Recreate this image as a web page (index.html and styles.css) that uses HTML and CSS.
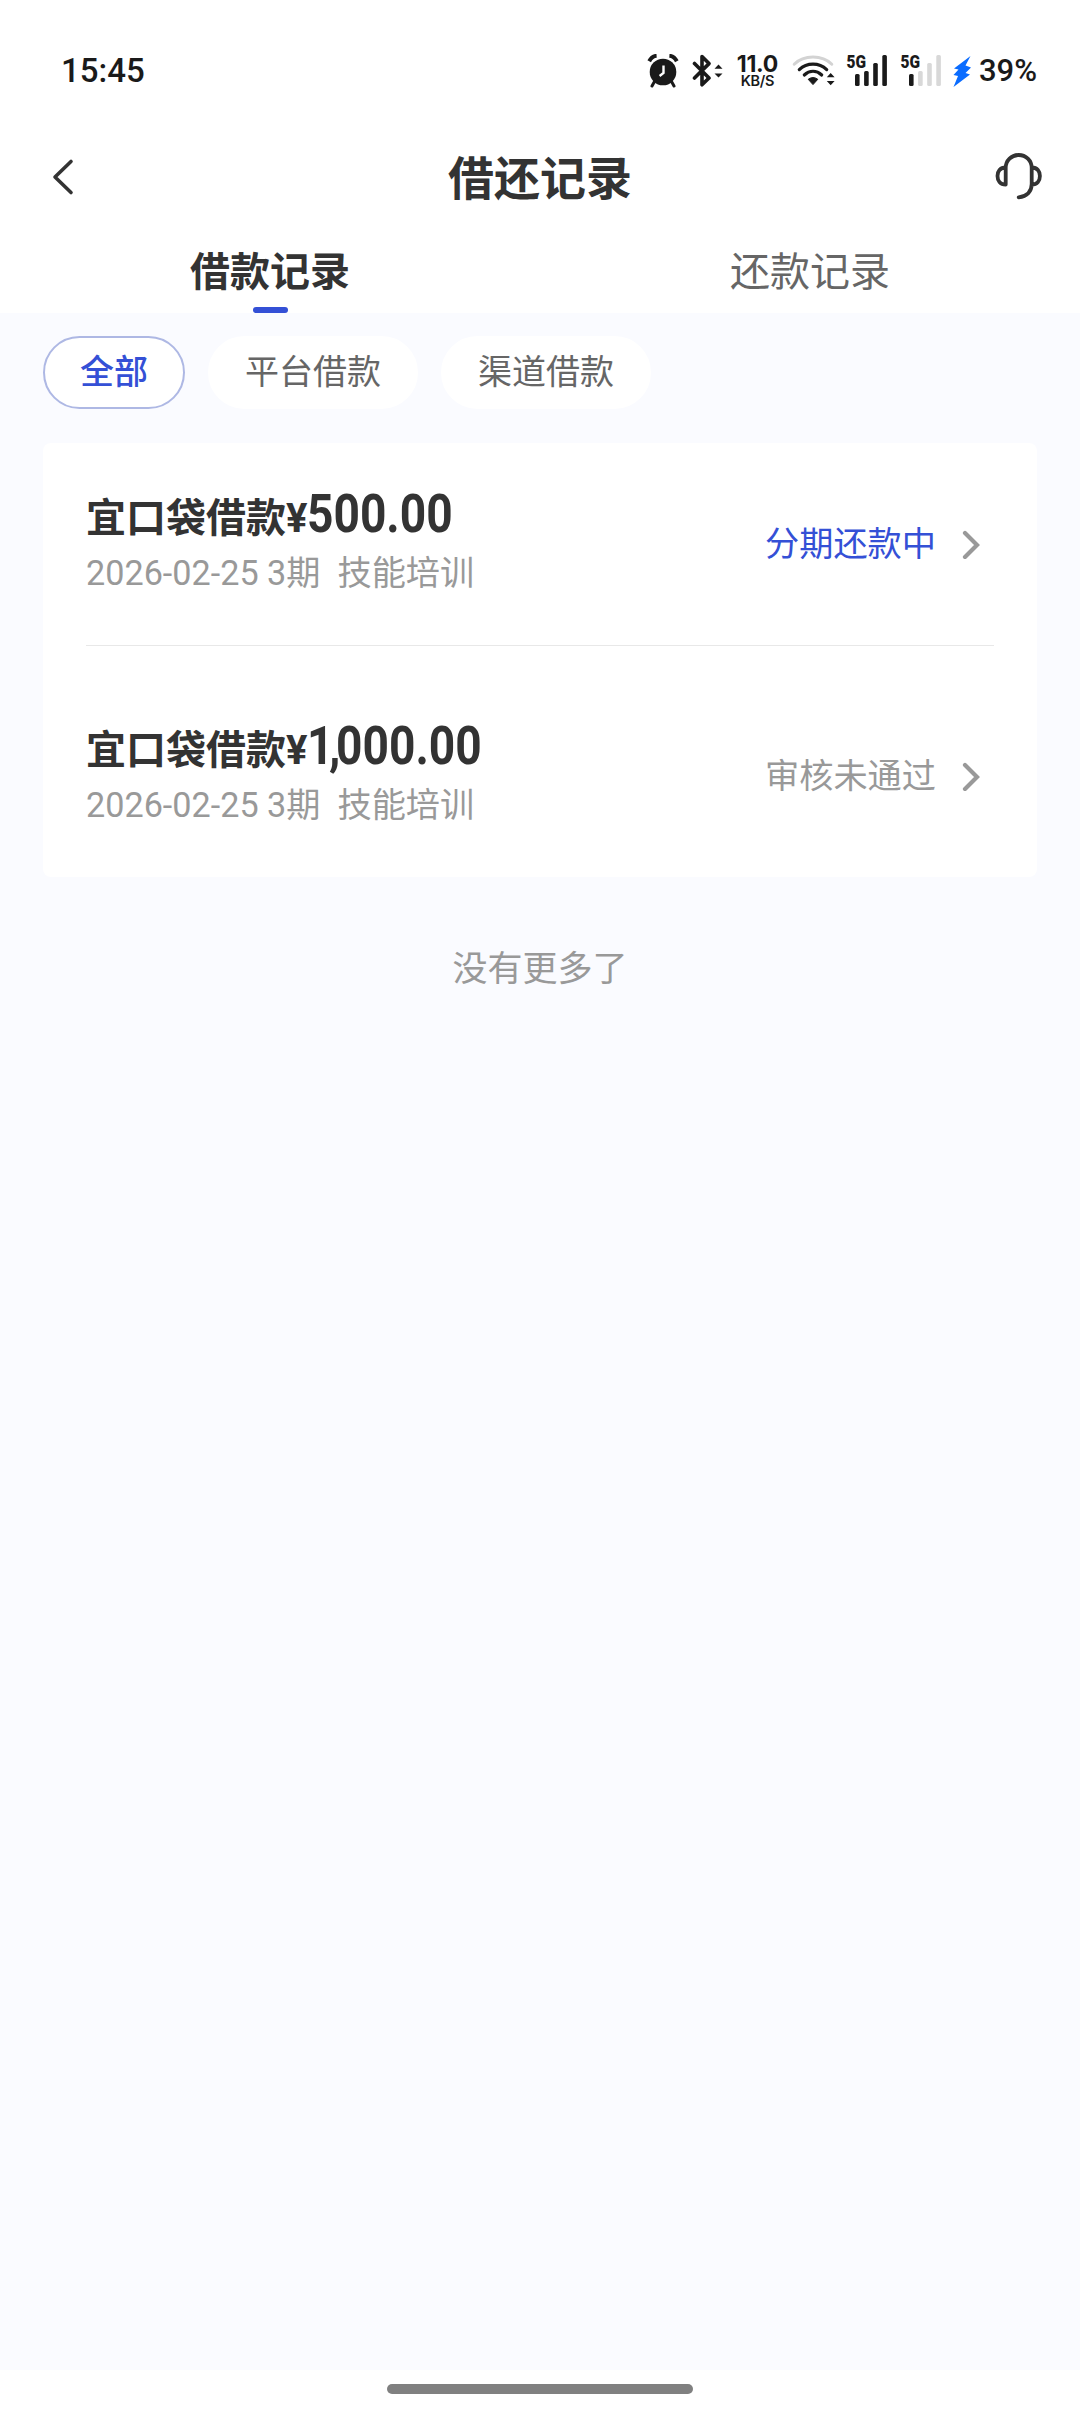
FILE: index.html
```
<!DOCTYPE html>
<html lang="zh-CN">
  <head>
    <meta charset="UTF-8" />
    <meta name="viewport" content="width=device-width, initial-scale=1.0" />
    <title>借还记录</title>
    <link rel="stylesheet" href="styles.css">
  </head>
  <body>
    <div class="status-bar">
      <span class="time">15:45</span>
      <div class="status-icons">
        <!-- alarm -->
        <svg class="icon-alarm" width="32" height="34" viewBox="0 0 32 34">
          <circle cx="16" cy="18" r="13.3" fill="#1a1a1a" />
          <path d="M2.200 7.200C4 3.800 6.500 2 9.600 1.800M29.800 7.200C28 3.800 25.500 2 22.400 1.800" stroke="#1a1a1a" stroke-width="4" fill="none" />
          <path d="M7.500 27.500L5 32M24.500 27.500L27 32" stroke="#1a1a1a" stroke-width="3" stroke-linecap="round" />
          <path d="M16.500 11.500V19L12.600 22" stroke="#fff" stroke-width="2.400" fill="none" />
        </svg>
        <!-- bluetooth -->
        <svg class="icon-bluetooth" width="32" height="34" viewBox="0 0 32 34">
          <path d="M2.500 9.500L17 24L10 30.800V2.600L17 9.600L2.500 24" stroke="#1a1a1a" stroke-width="3.600" fill="none" stroke-linejoin="round" stroke-linecap="round" />
          <path d="M22.500 14.800L26.500 10.600L30.500 14.800ZM22.500 19.400L26.500 23.600L30.500 19.400Z" fill="#1a1a1a" />
        </svg>
        <div class="net-speed">
          <b>11.0</b>
          <span>KB/S</span>
        </div>
        <!-- wifi -->
        <svg class="icon-wifi" width="44" height="34" viewBox="0 0 44 34">
          <path d="M2.200 10.200C12 .6 30 .6 39.800 10.200" stroke="#d3d3d3" stroke-width="3" fill="none" stroke-linecap="round" />
          <path d="M7.300 15.600C15 8.200 27 8.200 34.700 15.600M12.300 21C17.500 16 24.500 16 29.700 21" stroke="#1a1a1a" stroke-width="3.200" fill="none" stroke-linecap="round" />
          <path d="M16.200 25.300Q21 21.800 25.800 25.300L21 30.600Z" fill="#1a1a1a" stroke="#1a1a1a" stroke-linejoin="round" />
          <path d="M34.800 23.200L38.700 19L42.600 23.200ZM34.800 27L38.700 31.200L42.600 27Z" fill="#1a1a1a" />
        </svg>
        <!-- signal, sim 1 -->
        <svg class="icon-signal" width="42" height="34" viewBox="0 0 42 34">
          <text class="net-type" x="0.500" y="13.800" textLength="19.500" lengthAdjust="spacingAndGlyphs">5G</text>
          <rect x="9" y="20" width="4.600" height="12" rx="1.500" fill="#1a1a1a" />
          <rect x="18.100" y="17" width="4.600" height="15" rx="1.500" fill="#1a1a1a" />
          <rect x="27.200" y="9" width="4.600" height="23" rx="1.500" fill="#1a1a1a" />
          <rect x="36.300" y="1" width="4.600" height="31" rx="1.500" fill="#1a1a1a" />
        </svg>
        <!-- signal, sim 2 -->
        <svg class="icon-signal" width="42" height="34" viewBox="0 0 42 34">
          <text class="net-type" x="0.500" y="13.800" textLength="19.500" lengthAdjust="spacingAndGlyphs">5G</text>
          <rect x="9" y="20" width="4.600" height="12" rx="1.500" fill="#1a1a1a" />
          <rect x="18.100" y="17" width="4.600" height="15" rx="1.500" fill="#d8d8d8" />
          <rect x="27.200" y="9" width="4.600" height="23" rx="1.500" fill="#d8d8d8" />
          <rect x="36.300" y="1" width="4.600" height="31" rx="1.500" fill="#d8d8d8" />
        </svg>
        <!-- charging -->
        <svg class="icon-bolt" width="19" height="34" viewBox="0 0 19 34">
          <path d="M17.500 2L1 14.500L5.500 15.500L0.500 21L5 22L0.500 33L17 20.500L12.500 19L18 13.500L12.500 11.500Z" fill="#0a6cff" />
        </svg>
        <span class="battery">39%</span>
      </div>
    </div>

    <header>
      <svg class="back-icon" width="24" height="40" viewBox="0 0 24 40">
        <path d="M19 4.500L3 20L19 35.500" stroke="#333" stroke-width="3.600" fill="none" stroke-linecap="round" stroke-linejoin="round" />
      </svg>
      <h1>借还记录</h1>
      <svg class="service-icon" width="48" height="50" viewBox="0 0 48 50">
        <path d="M10.700 32.500V16C10.700 8.500 16.500 3 23.700 3S36.700 8.500 36.700 16V32C36.700 39.500 32 44.300 23.700 45.300M10.700 15.500C5 15.500 2.500 19.500 2.500 24S5 32.500 10.700 32.500M36.700 15.500C42.400 15.500 44.900 19.500 44.900 24S42.400 32.500 36.700 32.500" stroke="#333" stroke-width="3.800" fill="none" stroke-linecap="round" stroke-linejoin="round" />
      </svg>
    </header>

    <nav class="tabs">
      <a class="tab active">借款记录</a>
      <a class="tab">还款记录</a>
    </nav>

    <main>
      <div class="filters">
        <button class="filter selected">全部</button>
        <button class="filter">平台借款</button>
        <button class="filter">渠道借款</button>
      </div>

      <section class="records">
        <div class="record">
          <div class="record-info">
            <h2>宜口袋借款¥<span class="amount">500.00</span></h2>
            <p>2026-02-25 3期&nbsp; 技能培训</p>
          </div>
          <span class="record-status repaying">分期还款中</span>
          <svg class="arrow" width="20" height="30" viewBox="0 0 20 30">
            <path d="M3 4L15 16L3 28" stroke="#999" stroke-width="4.200" fill="none" stroke-linecap="round" />
          </svg>
        </div>
        <div class="record">
          <div class="record-info">
            <h2>宜口袋借款¥<span class="amount"><span class="thousands">1,</span>000.00</span></h2>
            <p>2026-02-25 3期&nbsp; 技能培训</p>
          </div>
          <span class="record-status">审核未通过</span>
          <svg class="arrow" width="20" height="30" viewBox="0 0 20 30">
            <path d="M3 4L15 16L3 28" stroke="#999" stroke-width="4.200" fill="none" stroke-linecap="round" />
          </svg>
        </div>
      </section>

      <p class="no-more">没有更多了</p>
    </main>

    <footer>
      <div class="home-indicator"></div>
    </footer>
  </body>
</html>
```
FILE: styles.css
```
* {
  box-sizing: border-box;
}

body {
  font-family: Roboto, "Noto Sans CJK SC", sans-serif;
  margin: 0;
  height: 2412px;
  background-color: #fff;
  color: #333;
  display: flex;
  flex-direction: column;
}

h1,
h2,
p {
  margin: 0;
}

.status-bar {
  height: 143px;
  padding: 0 43px 2px 61px;
  display: flex;
  justify-content: space-between;
  align-items: center;
  color: #1a1a1a;
}

.time {
  font-size: 33px;
  font-weight: 500;
}

.status-icons {
  display: flex;
  align-items: center;
}

.icon-bluetooth {
  margin-left: 13px;
}

.net-speed {
  width: 43px;
  margin: 0 13px 0 12px;
  display: flex;
  flex-direction: column;
  align-items: center;
  font-family: Inter, sans-serif;
}

.net-speed b {
  font-size: 23px;
  line-height: 20px;
  font-weight: 700;
  letter-spacing: -0.3px;
}

.net-speed span {
  font-size: 14.5px;
  line-height: 14px;
  font-weight: 600;
  letter-spacing: -0.3px;
}

.icon-signal {
  margin-left: 12px;
  overflow: visible;
}

.icon-wifi + .icon-signal {
  margin-left: 10px;
}

.net-type {
  font-family: Roboto, sans-serif;
  font-size: 18px;
  font-weight: 900;
  fill: #1a1a1a;
}

.icon-bolt {
  margin: 0 7px 0 11px;
}

.battery {
  font-size: 31px;
  font-weight: 500;
  line-height: 34px;
}

header {
  height: 72px;
  padding: 0 37px 0 52px;
  display: flex;
  justify-content: space-between;
  align-items: center;
}

header h1 {
  font-size: 46px;
  line-height: 72px;
  font-weight: 700;
}

.back-icon {
  margin: 0 9px 4px 0;
}

.service-icon {
  margin-bottom: 4px;
}

.tabs {
  height: 98px;
  padding-top: 18px;
  display: flex;
}

.tab {
  flex: 1;
  position: relative;
  font-size: 40px;
  line-height: 80px;
  text-align: center;
  color: #666;
}

.tab.active {
  font-weight: 700;
  color: #333;
}

.tab.active::after {
  content: "";
  position: absolute;
  left: 50%;
  bottom: 0;
  width: 35px;
  height: 6px;
  margin-left: -17px;
  border-radius: 3px;
  background-color: #3450d6;
}

main {
  flex: 1;
  padding: 23px 43px 0;
  background-color: #fafbff;
}

.filters {
  display: flex;
  gap: 23px;
  margin-bottom: 34px;
}

.filter {
  height: 73px;
  padding: 0 35px;
  font-family: inherit;
  font-size: 34px;
  line-height: 69px;
  color: #666;
  background-color: #fff;
  border: 2px solid #fff;
  border-radius: 37px;
}

.filter.selected {
  font-weight: 500;
  color: #3450d6;
  border-color: #aeb8e4;
}

.records {
  padding: 0 43px;
  background-color: #fff;
  border-radius: 8px;
}

.record {
  display: flex;
  align-items: center;
  padding: 48px 0;
}

.record + .record {
  padding-top: 77px;
  border-top: 1px solid #e8e8e8;
}

.record-info {
  flex: 1;
}

.record h2 {
  font-size: 40px;
  line-height: 56px;
  font-weight: 700;
}

.amount {
  display: inline-block;
  font-size: 53px;
  line-height: 40px;
  transform: scaleX(0.87);
  transform-origin: left;
}

.thousands {
  letter-spacing: -5px;
}

.record-info p {
  margin-top: 3px;
  font-size: 34.2px;
  line-height: 47px;
  color: #999;
}

.record-status {
  font-size: 34.2px;
  line-height: 50px;
  color: #999;
}

.record-status.repaying {
  color: #3450d6;
}

.arrow {
  margin: 0 12px 0 26px;
}

.no-more {
  margin-top: 68px;
  font-size: 35px;
  line-height: 50px;
  text-align: center;
  color: #999;
}

footer {
  height: 42px;
  padding-top: 14px;
  display: flex;
  justify-content: center;
}

.home-indicator {
  width: 306px;
  height: 10px;
  border-radius: 5px;
  background-color: #808080;
}
```
